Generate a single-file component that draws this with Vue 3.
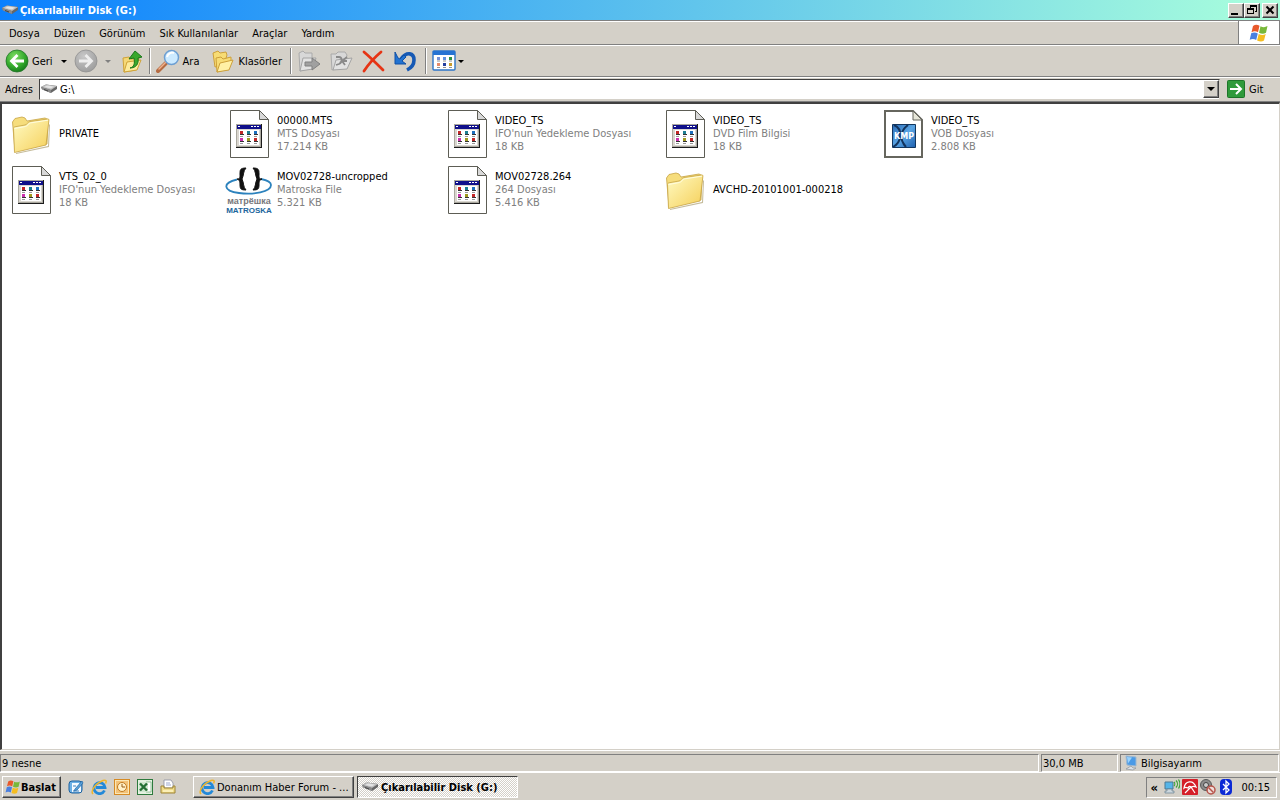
<script setup>
const menus = ['Dosya', 'Düzen', 'Görünüm', 'Sık Kullanılanlar', 'Araçlar', 'Yardım']

const files = [
  { name: 'PRIVATE', icon: 'folder' },
  { name: '00000.MTS', type: 'MTS Dosyası', size: '17.214 KB', icon: 'file' },
  { name: 'VIDEO_TS', type: "IFO'nun Yedekleme Dosyası", size: '18 KB', icon: 'file' },
  { name: 'VIDEO_TS', type: 'DVD Film Bilgisi', size: '18 KB', icon: 'file' },
  { name: 'VIDEO_TS', type: 'VOB Dosyası', size: '2.808 KB', icon: 'kmp' },
  { name: 'VTS_02_0', type: "IFO'nun Yedekleme Dosyası", size: '18 KB', icon: 'file' },
  { name: 'MOV02728-uncropped', type: 'Matroska File', size: '5.321 KB', icon: 'matroska' },
  { name: 'MOV02728.264', type: '264 Dosyası', size: '5.416 KB', icon: 'file' },
  { name: 'AVCHD-20101001-000218', icon: 'folder' },
]

const quick = [
  { id: 'desk', label: 'Masaüstünü Göster' },
  { id: 'ie', label: 'Internet Explorer' },
  { id: 'outlook', label: 'Outlook' },
  { id: 'excel', label: 'Excel' },
  { id: 'printer', label: 'Yazıcı' },
]
const tray = ['net', 'avira', 'mute', 'bt']
</script>

<template>
  <div class="screen">
    <svg class="defs" aria-hidden="true">
      <defs>
        <linearGradient id="gFold" x1="0" y1="0" x2="1" y2="1">
          <stop offset="0" stop-color="#fffbc4" /><stop offset="1" stop-color="#f5cf58" />
        </linearGradient>
        <radialGradient id="gGreen" cx=".4" cy=".3" r=".75">
          <stop offset="0" stop-color="#7fdc66" /><stop offset=".6" stop-color="#35ab2c" /><stop offset="1" stop-color="#14771a" />
        </radialGradient>
        <radialGradient id="gGray" cx=".4" cy=".3" r=".75">
          <stop offset="0" stop-color="#c8c8c8" /><stop offset="1" stop-color="#9c9c9c" />
        </radialGradient>
        <linearGradient id="gKmp" x1="0" y1="0" x2="1" y2="1">
          <stop offset="0" stop-color="#2b6cb8" /><stop offset=".5" stop-color="#5aa5e4" /><stop offset="1" stop-color="#1d5fae" />
        </linearGradient>
      </defs>

      <symbol id="i-drive" viewBox="0 0 16 16">
        <path d="M0 6 5 3.500l11 1.500v3l-6 4-9-4z" fill="#666" />
        <path d="M0 6 5 3.500l11 1.500-6 4z" fill="#bdbdbd" />
        <path d="m3 6 3-1.500 7 1-3 2z" fill="#e4e4e4" />
        <path d="m0 6 10 3v3L1 8.500z" fill="#8a8a8a" />
        <path d="m3 8 4 1.400v1L3 9z" fill="#444" />
      </symbol>

      <symbol id="i-flag" viewBox="0 0 20 20">
        <path d="M4 3c2.500-1.800 4.500-1.300 6.500-.2L9 9.300C7 8 5 7.800 2.500 9.200z" fill="#e8592b" />
        <path d="M11.500 3.300c2 1 4.300 1.500 7-.2L17 9.700c-2.500 1.500-4.800 1-7 0z" fill="#78b83a" />
        <path d="M2.200 10.300C4.500 9 6.700 9.200 8.800 10.400L7.200 17C5.200 15.700 3 15.500.700 16.800z" fill="#4a7fe0" />
        <path d="M9.700 10.900c2.300 1.100 4.500 1.500 7 .1L15 17.500c-2.200 1.400-4.600 1-6.900-.1z" fill="#f5bd20" />
      </symbol>

      <symbol id="i-folder" viewBox="0 0 48 48">
        <path d="m9 43 32-7 1-22 1 1-1 22-33 7z" fill="#8b7a3a" opacity=".5" />
        <path d="M5.500 12 8 8.500 15 7l3 1 2 3 18-3 3 1.500L40 34 8 41z" fill="#f6dd7c" stroke="#c7a344" stroke-width=".8" />
        <path d="m7.500 42.500-1-24c0-1 .5-1.500 1.500-1.700l10-1.800c2-.4 3-3 5-3.500L40.500 9c1-.2 1.500.300 1.400 1.300L39 35z" fill="url(#gFold)" stroke="#c7a344" stroke-width=".8" />
        <path d="m7.500 18.500 11-2c2-.500 3-3.200 5-3.600L41 10.200" fill="none" stroke="#fffde0" />
      </symbol>

      <symbol id="i-file" viewBox="0 0 48 48">
        <path d="M5.500.500h29l9 9v38h-38z" fill="#fff" stroke="#5d5d55" />
        <path d="M34.500.500v9h9z" fill="#d8d8d8" stroke="#5d5d55" />
        <path d="M11 14h26v24H11z" fill="#1c1c1c" />
        <path d="M11 14h25v23H11z" fill="#aaa89f" />
        <path d="M12 15h23v21H12z" fill="#d9d6cf" />
        <path d="M12 15h24v4H12z" fill="#10108a" />
        <path d="M13 16h2v1h-2zM26 16h2v1h-2zM29 16h2v1h-2zM32 16h2v1h-2z" fill="#fff" />
        <path d="M14 20h20v15H14z" fill="#fff" />
        <path d="M15 24h4v1h-4zM22 24h4v1h-4zM29 24h4v1h-4zM15 31h4v1h-4zM22 31h4v1h-4zM29 31h4v1h-4z" fill="#333" />
        <path d="M15 21h3v3h-3zM29 28h3v3h-3z" fill="#c22727" />
        <path d="M22 21h3v3h-3z" fill="#1d7e91" /><path d="M29 21h3v3h-3z" fill="#1c6ebd" />
        <path d="M15 28h3v3h-3z" fill="#ca31ad" /><path d="M22 28h3v3h-3z" fill="#a09a1e" />
        <path d="M15 33h3v1h-3zM22 33h3v1h-3zM29 33h3v1h-3zM15 26h3v1h-3zM22 26h3v1h-3zM29 26h3v1h-3z" fill="#999" />
      </symbol>

      <symbol id="i-back" viewBox="0 0 24 24">
        <circle cx="12" cy="12" r="11" fill="url(#gGreen)" stroke="#23752a" stroke-width=".8" />
        <path d="M19 12H7m5.500-6L6.500 12l6 6" fill="none" stroke="#fff" stroke-width="2.800" />
      </symbol>
      <symbol id="i-forward" viewBox="0 0 24 24">
        <circle cx="12" cy="12" r="11" fill="url(#gGray)" stroke="#909090" stroke-width=".8" />
        <path d="M5 12h12m-5.500-6 6 6-6 6" fill="none" stroke="#eee" stroke-width="2.800" />
      </symbol>
      <symbol id="i-up" viewBox="0 0 24 24">
        <path d="m3 9 6-1 2 2 8-1-3 12-12 2z" fill="#f5d877" stroke="#d0a338" />
        <path d="m4 23 3-10 14-2-4 10z" fill="#fdeb9c" stroke="#d0a338" />
        <path d="M10 19c4-1 5-4 4-10l-5 1 6-8 7 6-4 1c1 6-2 10-8 10z" fill="#3aa82d" stroke="#1b761b" />
      </symbol>
      <symbol id="i-search" viewBox="0 0 24 24">
        <path d="m10 14-8 8" stroke="#b56b42" stroke-width="4" stroke-linecap="round" />
        <path d="m10 13-7 7" stroke="#f0b18c" stroke-width="1.500" stroke-linecap="round" />
        <circle cx="15.500" cy="8.500" r="7" fill="#cceaff" stroke="#6d9fd2" stroke-width="1.500" />
        <path d="M11 8c1-4 5-5 7-4" stroke="#fff" stroke-width="2" fill="none" />
      </symbol>
      <symbol id="i-folders" viewBox="0 0 24 24">
        <path d="m2 4 5-2 2 2 6-1 1 3-3 10-9 2z" fill="#f7dc74" stroke="#cda03a" />
        <path d="m5 9 5-1 2 2 8-2v4l-3 8-11 3z" fill="#f7dc74" stroke="#cda03a" />
        <path d="m6 23 3-9 13-3-4 10z" fill="#fff0a5" stroke="#cda03a" />
      </symbol>
      <symbol id="i-move" viewBox="0 0 24 24">
        <path d="M2 4 6 2l2 2h7v15l-12 3z" fill="#d8d8d8" stroke="#aaa" />
        <path d="m3 22 3-13h13l-3 11z" fill="#e2e2e2" stroke="#a4a4a4" />
        <path d="M8 13h7V9l8 6-8 6v-4H8z" fill="#a0a0a0" stroke="#808080" />
      </symbol>
      <symbol id="i-copy" viewBox="0 0 24 24">
        <path d="M2 5h5l2-2h7l2 3-3 12-12 3z" fill="#d8d8d8" stroke="#aaa" />
        <path d="m4 21 3-10 16-2-5 11z" fill="#e2e2e2" stroke="#a4a4a4" />
        <path d="M7 8h3c3 0 4 5 0 7l-3 1M18 8l-5 4h5m-5 0 3 4" fill="none" stroke="#8a8a8a" stroke-width="1.800" />
      </symbol>
      <symbol id="i-delete" viewBox="0 0 24 24">
        <path d="M3 3C9 8 17 16 22 21M20 3C14 8 7 16 3 22" fill="none" stroke="#e63414" stroke-width="2.800" stroke-linecap="round" />
      </symbol>
      <symbol id="i-undo" viewBox="0 0 24 24">
        <path d="M8 10c6-8 13-6 13 1 0 5-3 8-7 10" fill="none" stroke="#1659b4" stroke-width="3.600" />
        <path d="M2 3v12h11l-4-3 4-4-2-2-4 4-2-1z" fill="#2273d2" stroke="#1050a5" />
      </symbol>
      <symbol id="i-views" viewBox="0 0 24 24">
        <rect x="1" y="2" width="22" height="19" rx="1" fill="#fff" stroke="#2d74c7" stroke-width="1.400" />
        <path d="M1 2h22v4H1z" fill="#2673d3" />
        <path d="M5 8h3v3H5z" fill="#7591d8" /><path d="M11 8h3v3h-3z" fill="#5f94df" /><path d="M17 8h3v3h-3z" fill="#2c9147" />
        <path d="M5 14h3v3H5z" fill="#e78a67" /><path d="M11 14h3v3h-3z" fill="#243f9f" /><path d="M17 14h3v3h-3z" fill="#c69a2d" />
        <path d="M5 12h3M11 12h3M17 12h3M5 18.500h3M11 18.500h3M17 18.500h3" stroke="#777" stroke-width=".8" />
      </symbol>
      <symbol id="i-go" viewBox="0 0 18 18">
        <rect x=".5" y=".5" width="17" height="17" rx="1" fill="#2f9a3b" stroke="#1d7529" />
        <path d="M3 9h10M9 4l5 5-5 5" fill="none" stroke="#fff" stroke-width="2" />
      </symbol>

      <symbol id="i-desk" viewBox="0 0 16 16">
        <rect x="1" y="2" width="13" height="12" rx="3" fill="#6bb0e6" stroke="#1e62a0" />
        <path d="M4 4h7l2 2v7H4z" fill="#f4faff" />
        <path d="m7 10 7-8 1 2-6 7-3 1z" fill="#5aa3db" stroke="#1e62a0" stroke-width=".7" />
        <path d="M5 7h3M5 12h6" stroke="#3b7fbb" />
      </symbol>
      <symbol id="i-ie" viewBox="0 0 16 16">
        <path d="M13.500 11.500A5.500 5.500 0 1 1 14 8.500H5" fill="none" stroke="#2389d8" stroke-width="2.800" />
        <path d="M2 15C-1 12 5 4 12 1.500c3-1 4 .5 2.500 3" fill="none" stroke="#efb62d" stroke-width="1.500" />
      </symbol>
      <symbol id="i-outlook" viewBox="0 0 16 16">
        <rect x=".5" y=".5" width="15" height="15" fill="#fbe7b5" stroke="#d68a23" />
        <rect x="2" y="2" width="12" height="12" fill="#f3c278" />
        <circle cx="8" cy="8" r="4.500" fill="#fff1c9" stroke="#c07a20" />
        <path d="M8 5v3h3" fill="none" stroke="#985b12" />
      </symbol>
      <symbol id="i-excel" viewBox="0 0 16 16">
        <rect x=".5" y=".5" width="15" height="15" fill="#e4f1e1" stroke="#2d7a3d" />
        <path d="M9 3h5v10H9z" fill="#fff" stroke="#71a977" stroke-width=".7" />
        <path d="M2 3h9v10H2z" fill="#cfe6cf" />
        <path d="m3 4.500 7 7m0-7-7 7" stroke="#246f34" stroke-width="2.400" />
      </symbol>
      <symbol id="i-printer" viewBox="0 0 16 16">
        <path d="M4 1h7l2 3v5H4z" fill="#fff" stroke="#8c8fa2" stroke-width=".8" />
        <path d="M1 7h3v2h9V7h2v7H1z" fill="#f0dc8a" stroke="#9e8435" />
        <path d="M3 12h10" stroke="#fff6c5" stroke-width="1.500" />
        <path d="M6 4h4M6 6h5" stroke="#9ba8cd" />
      </symbol>
      <symbol id="i-pc" viewBox="0 0 16 16">
        <path d="m3 1 10 1v9l-9-1z" fill="#4a9ae6" stroke="#9cb7d0" />
        <path d="m4 2 5 .5-4 6z" fill="#9ad2fb" />
        <path d="m8 11 2 2h3l-3 2-7-1z" fill="#dce1e6" stroke="#7f8a96" stroke-width=".6" />
      </symbol>
      <symbol id="i-net" viewBox="0 0 16 16">
        <path d="M1 3h8v7H1z" fill="#56b5e8" stroke="#4d7893" />
        <path d="M3 10h5v2h2v2H1v-2h2z" fill="#ccd7de" stroke="#658090" stroke-width=".7" />
        <path d="M10 3c1 1 1 3 0 4M12 1.500c2 2 2 5 0 7M14.500.500c2 3 2 6 0 9" fill="none" stroke="#3fa536" stroke-width="1.200" />
      </symbol>
      <symbol id="i-avira" viewBox="0 0 16 16">
        <rect width="16" height="16" rx="1" fill="#d51f28" />
        <path d="M2 9C3 2 11 0 14 8c-2-1-3-1-4.500 0C8 7 7 7 6 9 4 8 3 8 2 9zM9 8l-6 6M9 8l4 6" fill="none" stroke="#fff" stroke-width="1.200" />
      </symbol>
      <symbol id="i-mute" viewBox="0 0 16 16">
        <circle cx="6" cy="6" r="5.500" fill="#8c8c8c" stroke="#5a5a5a" />
        <circle cx="6" cy="6" r="2.500" fill="#ccc" stroke="#444" />
        <circle cx="11" cy="11" r="4" fill="#eedcd8" stroke="#b65349" stroke-width="1.500" />
        <path d="m8.500 8.500 5 5" stroke="#b65349" stroke-width="1.500" />
      </symbol>
      <symbol id="i-bt" viewBox="0 0 16 16">
        <rect x="2" width="12" height="16" rx="4" fill="#0b29d5" />
        <path d="m5 5 6 6-3 3V2l3 3-6 6" fill="none" stroke="#fff" stroke-width="1.300" />
      </symbol>
    </svg>

    <header class="title">
      <svg class="i16"><use href="#i-drive" /></svg>
      <h1>Çıkarılabilir Disk (G:)</h1>
      <div class="winbtns">
        <button class="wb" aria-label="Simge Durumuna Küçült"><svg viewBox="0 0 12 10"><path d="M1 8h7v2H1z" /></svg></button>
        <button class="wb" aria-label="Önceki Boyut"><svg viewBox="0 0 12 10"><path d="M4 0h7v7H9V6h1V2H5v1H4zM1 3h7v6H1zm1 2v3h5V5z" fill-rule="evenodd" /></svg></button>
        <button class="wb last" aria-label="Kapat"><svg viewBox="0 0 12 10"><path d="m2.500 1.500 7 7m0-7-7 7" stroke="#000" stroke-width="2" /></svg></button>
      </div>
    </header>

    <nav class="menubar">
      <div class="menus"><button v-for="m in menus" :key="m">{{ m }}</button></div>
      <div class="brand"><svg><use href="#i-flag" /></svg></div>
    </nav>

    <div class="toolbar">
      <button><svg class="i24"><use href="#i-back" /></svg><span>Geri</span></button>
      <button class="drop" aria-label="Geri listesi"><i class="arrow" /></button>
      <button aria-label="İleri"><svg class="i24"><use href="#i-forward" /></svg></button>
      <button class="drop far" aria-label="İleri listesi"><i class="arrow dim" /></button>
      <button aria-label="Yukarı"><svg class="i24"><use href="#i-up" /></svg></button>
      <i class="sep" />
      <button><svg class="i24"><use href="#i-search" /></svg><span>Ara</span></button>
      <button class="wide"><svg class="i24"><use href="#i-folders" /></svg><span>Klasörler</span></button>
      <i class="sep" />
      <button class="tool" aria-label="Taşı"><svg class="i24"><use href="#i-move" /></svg></button>
      <button class="tool" aria-label="Kopyala"><svg class="i24"><use href="#i-copy" /></svg></button>
      <button class="tool" aria-label="Sil"><svg class="i24"><use href="#i-delete" /></svg></button>
      <button class="tool" aria-label="Geri Al"><svg class="i24"><use href="#i-undo" /></svg></button>
      <i class="sep" />
      <button aria-label="Görünümler"><svg class="i24"><use href="#i-views" /></svg><i class="arrow" /></button>
    </div>

    <div class="address">
      <label for="addr">Adres</label>
      <div class="field">
        <svg class="i16"><use href="#i-drive" /></svg>
        <input id="addr" type="text" value="G:\">
        <button class="raised" aria-label="Adres listesi"><i class="arrow big" /></button>
      </div>
      <button class="go"><svg class="i18"><use href="#i-go" /></svg>Git</button>
    </div>

    <main class="view">
      <ul>
        <li v-for="(f, n) in files" :key="n">
          <svg v-if="f.icon === 'kmp'" class="i48" viewBox="0 0 48 48">
            <path d="M6 1h28l9 9v37H6z" fill="#fff" stroke="#66665e" stroke-width="2" />
            <path d="M34 1v9h9z" fill="#e6e6d8" stroke="#66665e" />
            <path d="M13.500 14.500h23v23h-23z" fill="url(#gKmp)" stroke="#12365f" />
            <path d="M15 15c9 4 8 17-1 22M29 15c-8 6-9 14-2 22" fill="none" stroke="#12335d" stroke-width="2" />
            <text class="kmp" x="25" y="29" text-anchor="middle">KMP</text>
          </svg>
          <svg v-else-if="f.icon === 'matroska'" class="i48" viewBox="0 0 48 48">
            <path d="M12 13.500C-3 17-2 25 14 27c14 2 32-1 32-8 0-3-5-5-10-6" fill="none" stroke="#2c82bd" stroke-width="1.800" />
            <path d="M21 2c-6 0-6 2-6 6s0 5-3 5c3 1 3 3 3 6 0 4 1 5 6 5-3-3-2-7-4-11 2-4 1-8 4-11zM28 2c6 0 6 2 6 6s0 5 3 5c-3 1-3 3-3 6 0 4-1 5-6 5 3-3 2-7 4-11-2-4-1-8-4-11z" fill="#111" stroke="#111" />
            <text class="mk gray" x="24" y="38" text-anchor="middle">матрёшка</text>
            <text class="mk" x="24" y="47" text-anchor="middle">MATROSKA</text>
          </svg>
          <svg v-else class="i48"><use :href="'#i-' + f.icon" /></svg>
          <div>
            <p>{{ f.name }}</p>
            <p v-if="f.type" class="sub">{{ f.type }}</p>
            <p v-if="f.size" class="sub">{{ f.size }}</p>
          </div>
        </li>
      </ul>
    </main>

    <footer class="status">
      <span class="count">9 nesne</span>
      <span class="bytes">30,0 MB</span>
      <span class="zone"><svg class="i16"><use href="#i-pc" /></svg>Bilgisayarım</span>
    </footer>

    <div class="taskbar">
      <button class="start raised"><svg class="i16"><use href="#i-flag" /></svg>Başlat</button>
      <div class="quick">
        <button v-for="q in quick" :key="q.id" :aria-label="q.label"><svg class="i16"><use :href="'#i-' + q.id" /></svg></button>
      </div>
      <button class="task raised"><svg class="i16"><use href="#i-ie" /></svg><span>Donanım Haber Forum - ...</span></button>
      <button class="task active"><svg class="i16"><use href="#i-drive" /></svg><span>Çıkarılabilir Disk (G:)</span></button>
      <div class="tray">
        <button class="chev" aria-label="Gizli simgeleri göster">«</button>
        <svg v-for="t in tray" :key="t" class="i16"><use :href="'#i-' + t" /></svg>
        <time>00:15</time>
      </div>
    </div>
  </div>
</template>

<style>
body { margin: 0; background: #d4d0c8; }
</style>

<style scoped>
.screen {
  display: flex;
  flex-direction: column;
  height: 100vh;
  background: #d4d0c8;
  color: #000;
  font: 11px/13px "DejaVu Sans Condensed", "DejaVu Sans", sans-serif;
  white-space: nowrap;
  overflow: hidden;
}
* { box-sizing: border-box; }
.defs { position: absolute; width: 0; height: 0; }
button { display: flex; align-items: center; margin: 0; padding: 0; border: 0; background: none; color: inherit; font: inherit; }
svg { display: block; flex: none; }
.i16 { width: 16px; height: 16px; }
.i18 { width: 18px; height: 18px; }
.i24 { width: 24px; height: 24px; }
.i48 { width: 48px; height: 48px; }
.raised { background: #d4d0c8; border: 1px solid; border-color: #fff #404040 #404040 #fff; box-shadow: inset -1px -1px #808080; }

.title { display: flex; align-items: center; flex: none; height: 20px; padding: 0 2px; gap: 2px; background: linear-gradient(90deg, #0a80ff, #aaffdc); }
h1 { margin: 0; color: #fff; font: inherit; font-weight: bold; }
.winbtns { display: flex; margin-left: auto; }
.wb { width: 16px; height: 15px; padding: 1px; background: #d4d0c8; border: 1px solid; border-color: #fff #404040 #404040 #fff; box-shadow: inset -1px -1px #808080; }
.wb svg { width: 12px; height: 10px; }
.wb.last { margin-left: 2px; }

.menubar { display: flex; flex: none; height: 25px; border-top: 1px solid #808080; border-bottom: 1px solid #808080; box-shadow: inset 0 1px #fff; }
.menus { display: flex; align-items: flex-end; flex: 1; padding: 0 0 1px 2px; border-right: 1px solid #808080; }
.menus button { height: 20px; padding: 0 7px; }
.brand { display: flex; align-items: center; justify-content: center; width: 41px; background: #fff; border-right: 1px solid #808080; }
.brand svg { width: 20px; height: 20px; }

.toolbar { display: flex; align-items: center; flex: none; height: 32px; padding-left: 5px; border-top: 1px solid #fff; border-bottom: 1px solid #808080; }
.toolbar span { padding: 0 3px; }
.drop { justify-content: center; width: 16px; height: 24px; }
.toolbar .drop { margin-right: 2px; }
.drop.far { width: 20px; }
.arrow { width: 0; height: 0; margin: 0 2px; border: 3px solid transparent; border-top-color: #000; border-bottom: 0; }
.arrow.dim { border-top-color: #808080; }
.arrow.big { border-width: 4px 4px 0; }
.toolbar button + .sep { margin-left: 5px; }
.sep { width: 2px; height: 26px; margin: 0 5px; border-left: 1px solid #808080; border-right: 1px solid #fff; }
.wide { margin-left: 9px; }
.tool { margin-right: 8px; }
.toolbar .tool + .sep { margin-left: 0; }

.address { display: flex; align-items: center; flex: none; height: 25px; padding: 0 2px 1px 5px; border-top: 1px solid #fff; border-bottom: 1px solid #808080; }
.address label { width: 34px; }
.field { display: flex; align-items: center; flex: 1; height: 21px; padding-left: 1px; background: #fff; border: 1px solid; border-color: #404040 #d4d0c8 #d4d0c8 #404040; }
.field input { flex: 1; min-width: 0; padding: 0 0 0 3px; border: 0; outline: 0; background: none; color: #000; font: inherit; }
.field .raised { justify-content: center; width: 16px; height: 18px; }
.go { width: 58px; gap: 4px; padding-left: 7px; }

.view { flex: 1; min-height: 0; padding: 6px 5px; background: #fff; border: 1px solid; border-width: 2px 1px 1px 2px; border-color: #404040 #d4d0c8 #d4d0c8 #404040; }
ul { display: grid; grid-template-columns: repeat(auto-fill, 218px); row-gap: 8px; margin: 0; padding: 0; list-style: none; }
li { display: flex; align-items: center; gap: 4px; height: 48px; }
li div { padding-bottom: 2px; }
p { margin: 0; }
.sub { color: #808080; }
.kmp { font: bold 8px "DejaVu Sans", sans-serif; fill: #fff; }
.mk { font: bold 8px "Liberation Sans", sans-serif; fill: #20659c; }
.mk.gray { font-size: 9px; fill: #77777b; }

.status { display: flex; flex: none; gap: 2px; height: 22px; padding: 3px 1px 0 0; border-top: 1px solid #fff; }
.status span { display: flex; align-items: center; height: 18px; border: 1px solid; border-color: #808080 #fff #fff #808080; padding-left: 1px; }
.count { flex: 1; }
.status .bytes { width: 77px; }
.status .zone { width: 159px; gap: 2px; padding-left: 2px; }

.taskbar { display: flex; align-items: center; flex: none; height: 28px; padding: 1px 3px 0 2px; border-top: 1px solid #fff; }
.start { height: 22px; width: 59px; padding: 0 2px; font-weight: bold; }
.quick { display: flex; gap: 7px; width: 125px; margin: 0 0 0 7px; }
.task { height: 22px; width: 161px; padding: 0 5px; gap: 2px; }
.task.active { margin-left: 3px; padding: 0 4px; gap: 3px; font-weight: bold; border: 1px solid; border-color: #404040 #fff #fff #404040; background: conic-gradient(#fff 25%, #d4d0c8 0 50%, #fff 0 75%, #d4d0c8 0) 0 0 / 2px 2px; }
.tray { display: flex; align-items: center; gap: 2px; height: 21px; margin-left: auto; padding: 0 6px 0 3px; border: 1px solid; border-color: #808080 #fff #fff #808080; }
.chev { width: 12px; font-weight: bold; font-size: 13px; }
.tray time { margin-left: 5px; }
</style>
